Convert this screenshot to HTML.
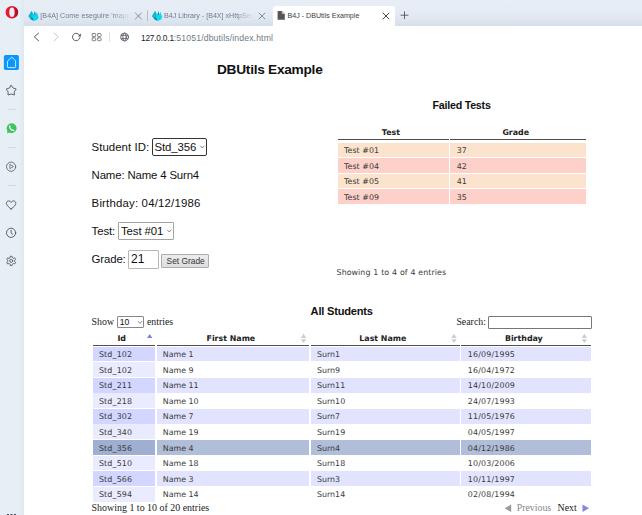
<!DOCTYPE html>
<html><head><meta charset="utf-8"><title>B4J - DBUtils Example</title>
<style>
*{margin:0;padding:0;box-sizing:border-box}
html,body{width:642px;height:515px;overflow:hidden;background:#fff}
body{position:relative;font-family:"Liberation Sans",sans-serif;color:#111}
.abs{position:absolute;white-space:nowrap;line-height:1}
#tabbar{left:0;top:0;width:642px;height:26px;background:linear-gradient(#e7eef6 0,#e5ecf5 45%,#dfe6f0 75%,#d6dee9 100%)}
#sidebar{left:0;top:0;width:24px;height:515px;background:linear-gradient(90deg,#e6eef6 0,#e6eef6 80%,#dfe8f2 100%)}
#nav{left:24px;top:26px;width:618px;height:22px;background:#fff;border-top-left-radius:2px}
#acttab{left:273px;top:6px;width:122px;height:21px;background:#fff;border-radius:3px 3px 0 0}
.tabtxt{font-size:7.1px;color:#737f8d;top:13px}
.ui{font-family:"Liberation Sans",sans-serif}
.cal{font-family:"Liberation Sans",sans-serif;color:#111}
.ver{font-family:"DejaVu Sans",sans-serif;color:#3a3a3a}
.ser{font-family:"Liberation Serif",serif;color:#222}
.row{left:92.6px;width:498.2px;height:14.4px}
.c{position:absolute;top:0;height:100%}
</style></head><body>
<div id="tabbar" class="abs"></div>
<div id="sidebar" class="abs"></div>
<div id="nav" class="abs"></div>
<div id="acttab" class="abs"></div>

<!-- tab texts -->
<div class="abs tabtxt" id="t1" style="left:40.3px;letter-spacing:0.08px;width:90px;overflow:hidden;-webkit-mask-image:linear-gradient(90deg,#000 80%,transparent);mask-image:linear-gradient(90deg,#000 80%,transparent)">[B4A] Come eseguire 'mappe</div>
<div class="abs tabtxt" id="t2" style="left:164px;width:90px;overflow:hidden;-webkit-mask-image:linear-gradient(90deg,#000 80%,transparent);mask-image:linear-gradient(90deg,#000 80%,transparent)">B4J Library - [B4X] xHttpServer</div>
<div class="abs tabtxt" id="t3" style="left:287.6px;color:#3c3c3c">B4J - DBUtils Example</div>

<!-- url -->
<div class="abs" id="url" style="left:141px;top:34px;font-size:8.67px;color:#6e7a87"><span id="ip" style="color:#222;font-size:8.3px;letter-spacing:-0.2px">127.0.0.1</span><span id="rest" style="letter-spacing:0.14px">:51051/dbutils/index.html</span></div>

<!-- page -->
<div class="abs cal" id="h1" style="left:217px;top:63.3px;font-size:13.7px;letter-spacing:-0.27px;font-weight:bold">DBUtils Example</div>
<div class="abs cal" id="h2" style="left:432.5px;top:100.4px;font-size:10.7px;letter-spacing:-0.24px;font-weight:bold">Failed Tests</div>
<div class="abs cal" id="h3" style="left:310.6px;top:306.00px;font-size:11.1px;letter-spacing:-0.22px;font-weight:bold">All Students</div>

<div class="abs cal" id="l1" style="left:91.6px;top:142px;font-size:11.4px;letter-spacing:0.05px">Student ID:</div>
<div class="abs" style="left:152px;top:138px;width:55px;height:18px;border:1px solid #333;border-radius:2px"></div>
<div class="abs cal" id="l1s" style="left:154.4px;top:142px;font-size:11.4px;letter-spacing:-0.1px">Std_356</div>
<div class="abs cal" id="l2" style="left:91.6px;top:170px;font-size:11.4px;letter-spacing:-0.15px">Name: Name 4 Surn4</div>
<div class="abs cal" id="l3" style="left:91.6px;top:198px;font-size:11.4px;letter-spacing:0.19px">Birthday: 04/12/1986</div>
<div class="abs cal" id="l4" style="left:91.6px;top:226px;font-size:11.4px;letter-spacing:-0.1px">Test:</div>
<div class="abs" style="left:118px;top:222px;width:56px;height:18.4px;border:1px solid #a4a4a4;border-radius:1px"></div>
<div class="abs cal" id="l4s" style="left:121px;top:226px;font-size:11.4px;letter-spacing:-0.1px">Test #01</div>
<div class="abs cal" id="l5" style="left:91.6px;top:254.3px;font-size:11.4px;letter-spacing:-0.13px">Grade:</div>
<div class="abs" style="left:128px;top:250px;width:31px;height:18.5px;border:1px solid #b6b6b6;border-radius:1px"></div>
<div class="abs" id="l5v" style="left:131px;top:252.5px;font-size:12px;color:#111">21</div>
<div class="abs" style="left:161.3px;top:254px;width:47.7px;height:14px;border:1px solid #adadad;background:linear-gradient(#ececec,#dedede);border-radius:1px"></div>
<div class="abs" id="btn" style="left:166.6px;top:257px;font-size:8.4px;color:#333">Set Grade</div>
<!-- failed tests -->
<div class="abs ver" id="fh1" style="left:381.8px;top:128.5px;font-size:7.9px;font-weight:bold;color:#222">Test</div>
<div class="abs ver" id="fh2" style="left:502.4px;top:128.5px;font-size:7.9px;font-weight:bold;color:#222">Grade</div>
<div class="abs" style="left:337.6px;top:139px;width:111.1px;height:1px;background:#505050"></div>
<div class="abs" style="left:450.2px;top:139px;width:135.5px;height:1px;background:#505050"></div>
<div class="abs" style="left:337.6px;top:142.60px;width:111.2px;height:14.7px;background:#fbe3cd"></div>
<div class="abs" style="left:450.2px;top:142.60px;width:135.5px;height:14.7px;background:#fbe3cd"></div>
<div class="abs ver" id="f0a" style="left:344px;top:147.15px;font-size:7.9px;letter-spacing:0.06px">Test #01</div>
<div class="abs ver" id="f0b" style="left:456.7px;top:147.15px;font-size:7.9px">37</div>
<div class="abs" style="left:337.6px;top:158.05px;width:111.2px;height:14.7px;background:#fdd0c9"></div>
<div class="abs" style="left:450.2px;top:158.05px;width:135.5px;height:14.7px;background:#fdd0c9"></div>
<div class="abs ver" id="f1a" style="left:344px;top:162.60px;font-size:7.9px;letter-spacing:0.06px">Test #04</div>
<div class="abs ver" id="f1b" style="left:456.7px;top:162.60px;font-size:7.9px">42</div>
<div class="abs" style="left:337.6px;top:173.50px;width:111.2px;height:14.7px;background:#fbe3cd"></div>
<div class="abs" style="left:450.2px;top:173.50px;width:135.5px;height:14.7px;background:#fbe3cd"></div>
<div class="abs ver" id="f2a" style="left:344px;top:178.05px;font-size:7.9px;letter-spacing:0.06px">Test #05</div>
<div class="abs ver" id="f2b" style="left:456.7px;top:178.05px;font-size:7.9px">41</div>
<div class="abs" style="left:337.6px;top:188.95px;width:111.2px;height:14.7px;background:#fdd0c9"></div>
<div class="abs" style="left:450.2px;top:188.95px;width:135.5px;height:14.7px;background:#fdd0c9"></div>
<div class="abs ver" id="f3a" style="left:344px;top:193.50px;font-size:7.9px;letter-spacing:0.06px">Test #09</div>
<div class="abs ver" id="f3b" style="left:456.7px;top:193.50px;font-size:7.9px">35</div>
<div class="abs ver" id="finfo" style="left:336.6px;top:268.50px;font-size:7.9px;letter-spacing:0.05px;word-spacing:0.27px">Showing 1 to 4 of 4 entries</div>
<!-- all students -->
<div class="abs ser" id="show" style="left:91.6px;top:317.45px;font-size:9.85px">Show</div>
<div class="abs" style="left:117.1px;top:316.4px;width:27.3px;height:12px;border:1px solid #888;border-radius:1px"></div>
<div class="abs" id="show10" style="left:119.8px;top:318.4px;font-size:8.6px;color:#111">10</div>
<div class="abs ser" id="entries" style="left:146.9px;top:317.45px;font-size:9.85px">entries</div>
<div class="abs ser" id="search" style="left:456.4px;top:317.45px;font-size:9.85px">Search:</div>
<div class="abs" style="left:488px;top:315.7px;width:104px;height:13.8px;border:1px solid #777;border-radius:1px"></div>
<div class="abs ver" id="sh0" style="left:117.4px;top:335.40px;font-size:7.9px;font-weight:bold;color:#222">Id</div>
<div class="abs ver" id="sh1" style="left:206.5px;top:335.40px;font-size:7.9px;font-weight:bold;color:#222">First Name</div>
<div class="abs ver" id="sh2" style="left:359.3px;top:335.40px;font-size:7.9px;font-weight:bold;color:#222">Last Name</div>
<div class="abs ver" id="sh3" style="left:504.9px;top:335.40px;font-size:7.9px;font-weight:bold;color:#222">Birthday</div>
<div class="abs" style="left:92.6px;top:345px;width:62.4px;height:1px;background:#505050"></div>
<div class="abs" style="left:156.5px;top:345px;width:152.4px;height:1px;background:#505050"></div>
<div class="abs" style="left:310.6px;top:345px;width:149.1px;height:1px;background:#505050"></div>
<div class="abs" style="left:461.0px;top:345px;width:129.8px;height:1px;background:#505050"></div>
<div class="abs" style="left:92.6px;top:346.60px;width:62.4px;height:14.8px;background:#d3d6ff"></div>
<div class="abs ver" id="r0c0" style="left:98.9px;top:351.20px;font-size:7.9px;letter-spacing:0.18px">Std_102</div>
<div class="abs" style="left:156.5px;top:346.60px;width:152.4px;height:14.8px;background:#e2e4ff"></div>
<div class="abs ver" id="r0c1" style="left:162.8px;top:351.20px;font-size:7.9px">Name 1</div>
<div class="abs" style="left:310.6px;top:346.60px;width:149.1px;height:14.8px;background:#e2e4ff"></div>
<div class="abs ver" id="r0c2" style="left:317px;top:351.20px;font-size:7.9px">Surn1</div>
<div class="abs" style="left:461.0px;top:346.60px;width:129.8px;height:14.8px;background:#e2e4ff"></div>
<div class="abs ver" id="r0c3" style="left:467.8px;top:351.20px;font-size:7.9px;letter-spacing:0.175px">16/09/1995</div>
<div class="abs" style="left:92.6px;top:362.17px;width:62.4px;height:14.8px;background:#eaebff"></div>
<div class="abs ver" id="r1c0" style="left:98.9px;top:366.77px;font-size:7.9px;letter-spacing:0.18px">Std_102</div>
<div class="abs ver" id="r1c1" style="left:162.8px;top:366.77px;font-size:7.9px">Name 9</div>
<div class="abs ver" id="r1c2" style="left:317px;top:366.77px;font-size:7.9px">Surn9</div>
<div class="abs ver" id="r1c3" style="left:467.8px;top:366.77px;font-size:7.9px;letter-spacing:0.175px">16/04/1972</div>
<div class="abs" style="left:92.6px;top:377.74px;width:62.4px;height:14.8px;background:#d3d6ff"></div>
<div class="abs ver" id="r2c0" style="left:98.9px;top:382.34px;font-size:7.9px;letter-spacing:0.18px">Std_211</div>
<div class="abs" style="left:156.5px;top:377.74px;width:152.4px;height:14.8px;background:#e2e4ff"></div>
<div class="abs ver" id="r2c1" style="left:162.8px;top:382.34px;font-size:7.9px">Name 11</div>
<div class="abs" style="left:310.6px;top:377.74px;width:149.1px;height:14.8px;background:#e2e4ff"></div>
<div class="abs ver" id="r2c2" style="left:317px;top:382.34px;font-size:7.9px">Surn11</div>
<div class="abs" style="left:461.0px;top:377.74px;width:129.8px;height:14.8px;background:#e2e4ff"></div>
<div class="abs ver" id="r2c3" style="left:467.8px;top:382.34px;font-size:7.9px;letter-spacing:0.175px">14/10/2009</div>
<div class="abs" style="left:92.6px;top:393.31px;width:62.4px;height:14.8px;background:#eaebff"></div>
<div class="abs ver" id="r3c0" style="left:98.9px;top:397.91px;font-size:7.9px;letter-spacing:0.18px">Std_218</div>
<div class="abs ver" id="r3c1" style="left:162.8px;top:397.91px;font-size:7.9px">Name 10</div>
<div class="abs ver" id="r3c2" style="left:317px;top:397.91px;font-size:7.9px">Surn10</div>
<div class="abs ver" id="r3c3" style="left:467.8px;top:397.91px;font-size:7.9px;letter-spacing:0.175px">24/07/1993</div>
<div class="abs" style="left:92.6px;top:408.88px;width:62.4px;height:14.8px;background:#d3d6ff"></div>
<div class="abs ver" id="r4c0" style="left:98.9px;top:413.48px;font-size:7.9px;letter-spacing:0.18px">Std_302</div>
<div class="abs" style="left:156.5px;top:408.88px;width:152.4px;height:14.8px;background:#e2e4ff"></div>
<div class="abs ver" id="r4c1" style="left:162.8px;top:413.48px;font-size:7.9px">Name 7</div>
<div class="abs" style="left:310.6px;top:408.88px;width:149.1px;height:14.8px;background:#e2e4ff"></div>
<div class="abs ver" id="r4c2" style="left:317px;top:413.48px;font-size:7.9px">Surn7</div>
<div class="abs" style="left:461.0px;top:408.88px;width:129.8px;height:14.8px;background:#e2e4ff"></div>
<div class="abs ver" id="r4c3" style="left:467.8px;top:413.48px;font-size:7.9px;letter-spacing:0.175px">11/05/1976</div>
<div class="abs" style="left:92.6px;top:424.45px;width:62.4px;height:14.8px;background:#eaebff"></div>
<div class="abs ver" id="r5c0" style="left:98.9px;top:429.05px;font-size:7.9px;letter-spacing:0.18px">Std_340</div>
<div class="abs ver" id="r5c1" style="left:162.8px;top:429.05px;font-size:7.9px">Name 19</div>
<div class="abs ver" id="r5c2" style="left:317px;top:429.05px;font-size:7.9px">Surn19</div>
<div class="abs ver" id="r5c3" style="left:467.8px;top:429.05px;font-size:7.9px;letter-spacing:0.175px">04/05/1997</div>
<div class="abs" style="left:92.6px;top:440.02px;width:62.4px;height:14.8px;background:#9fafd1"></div>
<div class="abs ver" id="r6c0" style="left:98.9px;top:444.62px;font-size:7.9px;letter-spacing:0.18px">Std_356</div>
<div class="abs" style="left:156.5px;top:440.02px;width:152.4px;height:14.8px;background:#b0bed9"></div>
<div class="abs ver" id="r6c1" style="left:162.8px;top:444.62px;font-size:7.9px">Name 4</div>
<div class="abs" style="left:310.6px;top:440.02px;width:149.1px;height:14.8px;background:#b0bed9"></div>
<div class="abs ver" id="r6c2" style="left:317px;top:444.62px;font-size:7.9px">Surn4</div>
<div class="abs" style="left:461.0px;top:440.02px;width:129.8px;height:14.8px;background:#b0bed9"></div>
<div class="abs ver" id="r6c3" style="left:467.8px;top:444.62px;font-size:7.9px;letter-spacing:0.175px">04/12/1986</div>
<div class="abs" style="left:92.6px;top:455.59px;width:62.4px;height:14.8px;background:#eaebff"></div>
<div class="abs ver" id="r7c0" style="left:98.9px;top:460.19px;font-size:7.9px;letter-spacing:0.18px">Std_510</div>
<div class="abs ver" id="r7c1" style="left:162.8px;top:460.19px;font-size:7.9px">Name 18</div>
<div class="abs ver" id="r7c2" style="left:317px;top:460.19px;font-size:7.9px">Surn18</div>
<div class="abs ver" id="r7c3" style="left:467.8px;top:460.19px;font-size:7.9px;letter-spacing:0.175px">10/03/2006</div>
<div class="abs" style="left:92.6px;top:471.16px;width:62.4px;height:14.8px;background:#d3d6ff"></div>
<div class="abs ver" id="r8c0" style="left:98.9px;top:475.76px;font-size:7.9px;letter-spacing:0.18px">Std_566</div>
<div class="abs" style="left:156.5px;top:471.16px;width:152.4px;height:14.8px;background:#e2e4ff"></div>
<div class="abs ver" id="r8c1" style="left:162.8px;top:475.76px;font-size:7.9px">Name 3</div>
<div class="abs" style="left:310.6px;top:471.16px;width:149.1px;height:14.8px;background:#e2e4ff"></div>
<div class="abs ver" id="r8c2" style="left:317px;top:475.76px;font-size:7.9px">Surn3</div>
<div class="abs" style="left:461.0px;top:471.16px;width:129.8px;height:14.8px;background:#e2e4ff"></div>
<div class="abs ver" id="r8c3" style="left:467.8px;top:475.76px;font-size:7.9px;letter-spacing:0.175px">10/11/1997</div>
<div class="abs" style="left:92.6px;top:486.73px;width:62.4px;height:14.8px;background:#eaebff"></div>
<div class="abs ver" id="r9c0" style="left:98.9px;top:491.33px;font-size:7.9px;letter-spacing:0.18px">Std_594</div>
<div class="abs ver" id="r9c1" style="left:162.8px;top:491.33px;font-size:7.9px">Name 14</div>
<div class="abs ver" id="r9c2" style="left:317px;top:491.33px;font-size:7.9px">Surn14</div>
<div class="abs ver" id="r9c3" style="left:467.8px;top:491.33px;font-size:7.9px;letter-spacing:0.175px">02/08/1994</div>
<div class="abs ser" id="sinfo" style="left:91.6px;top:503.1px;font-size:9.95px">Showing 1 to 10 of 20 entries</div>
<div class="abs ser" id="prev" style="left:516.7px;top:502.9px;font-size:9.85px;color:#888">Previous</div>
<div class="abs ser" id="next" style="left:557.6px;top:502.9px;font-size:9.85px;color:#222">Next</div>
<svg class="abs" id="icons" style="left:0;top:0" width="642" height="515" viewBox="0 0 642 515" fill="none" stroke-linecap="round" stroke-linejoin="round">
<defs><linearGradient id="og" x1="0" y1="0" x2="1" y2="0"><stop offset="0" stop-color="#f0182f"/><stop offset="0.6" stop-color="#e3102a"/><stop offset="1" stop-color="#a80a20"/></linearGradient></defs>
<path fill="url(#og)" fill-rule="evenodd" d="M11.9 6a6.3 6.25 0 1 0 0 12.5a6.3 6.25 0 1 0 0-12.5zM11.95 7.4a2.7 4.85 0 1 1 0 9.7a2.7 4.85 0 1 1 0-9.7z"/>
<g transform="translate(0,0)"><path fill="#0ad8f4" d="M28.4 16.3L29.7 14L31.5 10.9L32.8 13.5L33.7 14.6L34.8 10.9L35.7 15L36.9 11.8L37.7 14.5L38.6 17L37.8 19.2L35.5 20.6L33.7 20.8L31 19.3Z"/><path fill="#17b4d2" d="M28.4 16.3L31.5 10.9L32.8 13.5L32.2 17L33.7 20.8L31 19.3Z"/><path fill="#167f9c" d="M30.3 18.2L32.3 17.6L33.7 20.8L31 19.3Z"/><path fill="#2b7fa3" d="M34.8 10.9L35.7 15L34.1 14.9Z"/></g>
<g transform="translate(123.6,0)"><path fill="#0ad8f4" d="M28.4 16.3L29.7 14L31.5 10.9L32.8 13.5L33.7 14.6L34.8 10.9L35.7 15L36.9 11.8L37.7 14.5L38.6 17L37.8 19.2L35.5 20.6L33.7 20.8L31 19.3Z"/><path fill="#17b4d2" d="M28.4 16.3L31.5 10.9L32.8 13.5L32.2 17L33.7 20.8L31 19.3Z"/><path fill="#167f9c" d="M30.3 18.2L32.3 17.6L33.7 20.8L31 19.3Z"/><path fill="#2b7fa3" d="M34.8 10.9L35.7 15L34.1 14.9Z"/></g>
<path stroke="#717c88" stroke-width="0.85" d="M135.4 13l6 6M141.4 13l-6 6"/>
<path stroke="#717c88" stroke-width="0.85" d="M259 13l6 6M265 13l-6 6"/>
<path stroke="#333" stroke-width="0.9" d="M383 13l6 6M389 13l-6 6"/>
<path stroke="#444" stroke-width="0.8" d="M401 15.2h7M404.5 11.7v7"/>
<path stroke="#a8b2bf" stroke-width="0.8" d="M147.5 10.6v10"/>
<path fill="#555" d="M277.6 11h4.2l3 3v5.8h-7.2z"/><path fill="#fff" d="M281.8 11v3h3z" opacity="0.55"/>
<path stroke="#555" stroke-width="1" d="M38.6 33.1L34.3 36.9L38.6 40.8"/>
<path stroke="#c6c9cd" stroke-width="1" d="M54.2 33.1L58.3 36.9L54.2 40.8"/>
<path stroke="#555" stroke-width="0.95" d="M79.6 35.3A3.75 3.75 0 1 0 79.95 37.6"/><path fill="#555" d="M80.9 33.4v3h-3z"/>
<rect x="92.2" y="33.6" width="3.5" height="2.9" rx="0.6" stroke="#707070" stroke-width="0.85"/>
<rect x="97.6" y="33.6" width="3.5" height="2.9" rx="0.6" stroke="#707070" stroke-width="0.85"/>
<rect x="92.2" y="37.8" width="3.5" height="2.9" rx="0.6" stroke="#707070" stroke-width="0.85"/>
<rect x="97.6" y="37.8" width="3.5" height="2.9" rx="0.6" stroke="#707070" stroke-width="0.85"/>
<path stroke="#d4d4d4" stroke-width="0.8" d="M109.5 33v8.6"/>
<g stroke="#4a4f57" stroke-width="0.8"><circle cx="124.5" cy="37" r="3.9"/><ellipse cx="124.5" cy="37" rx="1.7" ry="3.9"/><path d="M121.2 35.3h6.6M121.2 38.7h6.6"/></g>
<rect x="3.9" y="54.9" width="15" height="15" rx="1.6" fill="#0a95ff"/>
<path stroke="#fff" stroke-width="0.8" d="M11.45 57.3L7.4 61.3V66.8Q7.4 67.6 8.2 67.6H14.8Q15.6 67.6 15.6 66.8V61.3Z"/>
<polygon stroke="#555" stroke-width="0.9" points="11.20,85.40 13.14,88.03 16.24,89.06 14.34,91.72 14.32,94.99 11.20,94.00 8.08,94.99 8.06,91.72 6.16,89.06 9.26,88.03"/>
<path stroke="#cdd5df" stroke-width="0.9" d="M8 109.4h7.5"/>
<path stroke="#cdd5df" stroke-width="0.9" d="M8 147.6h7.5"/>
<path stroke="#cdd5df" stroke-width="0.9" d="M8 185.5h7.5"/>
<circle cx="11.6" cy="128.2" r="5.7" fill="#f4f8f4"/><path fill="#f4f8f4" d="M6 134.2l1-3.4l2.6 2.6z"/><circle cx="11.6" cy="128.2" r="5" fill="#3ec55c"/><path fill="#3ec55c" d="M6.8 133.4l0.9-2.8l2 2z"/>
<path stroke="#fff" stroke-width="1.3" d="M9.6 125.8Q9.6 130.2 14 130.6"/>
<circle cx="11.1" cy="166.7" r="4.6" stroke="#666" stroke-width="0.9"/><path stroke="#666" stroke-width="0.8" d="M9.9 164.7v4l3.3-2z"/>
<path stroke="#555" stroke-width="0.9" d="M11.1 209C8 206.6 6.4 205.2 6.4 203.3C6.4 201.9 7.5 200.9 8.7 200.9C9.7 200.9 10.6 201.5 11.1 202.4C11.6 201.5 12.5 200.9 13.5 200.9C14.7 200.9 15.8 201.9 15.8 203.3C15.8 205.2 14.2 206.6 11.1 209Z"/>
<circle cx="11.1" cy="232.8" r="4.6" stroke="#555" stroke-width="0.9"/><path stroke="#555" stroke-width="0.9" d="M11.1 230.2v2.7l1.6 1.4"/>
<polygon stroke="#555" stroke-width="0.85" points="10.12,257.57 10.32,256.28 12.08,256.28 12.28,257.57 13.54,258.30 14.76,257.83 15.64,259.35 14.62,260.17 14.62,261.63 15.64,262.45 14.76,263.97 13.54,263.50 12.28,264.23 12.08,265.52 10.32,265.52 10.12,264.23 8.86,263.50 7.64,263.97 6.76,262.45 7.78,261.63 7.78,260.17 6.76,259.35 7.64,257.83 8.86,258.30"/><circle cx="11.2" cy="260.9" r="1.5" stroke="#555" stroke-width="0.85"/>
<path fill="#4a4f5a" d="M6.9 514h2.1v1h-2.1zM10.4 514h2.1v1h-2.1zM13.9 514h2.1v1h-2.1z"/>
<path stroke="#666" stroke-width="0.8" d="M200.5 146l1.8 2l1.8 -2"/>
<path stroke="#666" stroke-width="0.8" d="M167.5 230l1.8 2l1.8 -2"/>
<path stroke="#666" stroke-width="0.8" d="M138.2 321.4l1.8 2l1.8 -2"/>
<path fill="#7f7fe6" d="M149.7 334l2.7 4.1h-5.4z"/>
<path fill="#cdcdcd" d="M303.5 333.7l2.7 4.3h-5.4zM303.5 343l2.7-3.8h-5.4z"/>
<path fill="#cdcdcd" d="M454 333.7l2.7 4.3h-5.4zM454 343l2.7-3.8h-5.4z"/>
<path fill="#cdcdcd" d="M584.4 333.7l2.7 4.3h-5.4zM584.4 343l2.7-3.8h-5.4z"/>
<path fill="#9a9a9a" d="M504.7 508.3l6.5-3.8v7.6z"/>
<path fill="#8585ea" d="M589 508.3l-6.5-3.8v7.6z"/>
</svg>
</body></html>
